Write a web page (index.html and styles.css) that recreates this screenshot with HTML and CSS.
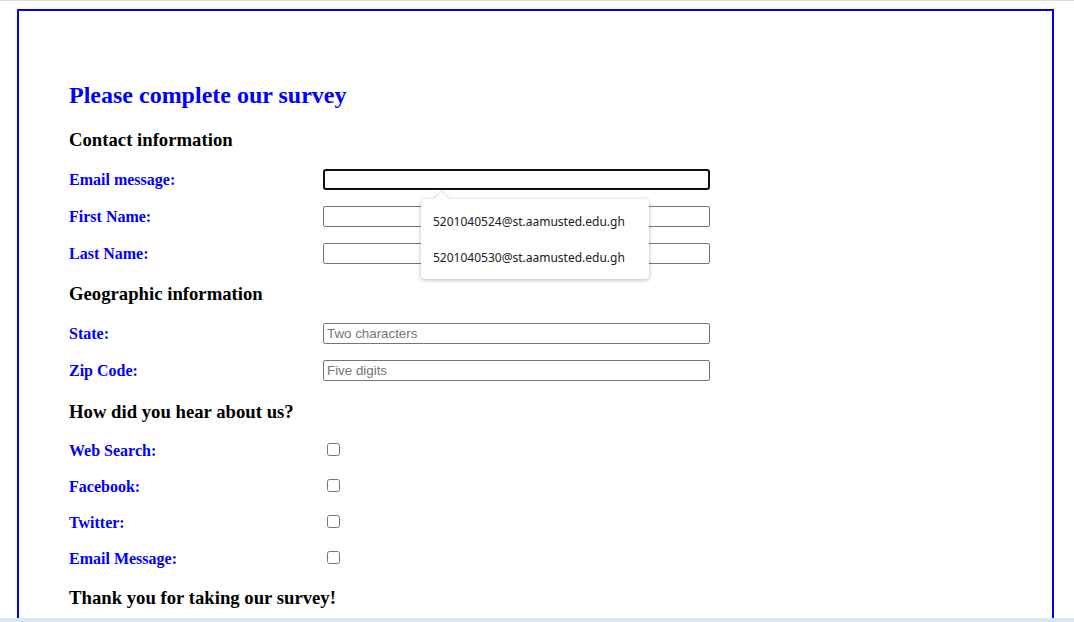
FILE: index.html
```html
<!DOCTYPE html>
<html lang="en">
<head>
<meta charset="utf-8">
<title>Survey</title>
<link rel="stylesheet" href="styles.css">
</head>
<body>
<div class="topline"></div>
<main class="frame">
  <h1 class="title">Please complete our survey</h1>
  <form class="survey">
    <h3 class="section first">Contact information</h3>
    <div class="row">
      <label class="lbl" for="email">Email message:</label>
      <input class="field focused" id="email" type="text">
    </div>
    <div class="row">
      <label class="lbl" for="first">First Name:</label>
      <input class="field" id="first" type="text">
    </div>
    <div class="row">
      <label class="lbl" for="last">Last Name:</label>
      <input class="field" id="last" type="text">
    </div>

    <h3 class="section geo">Geographic information</h3>
    <div class="row">
      <label class="lbl" for="state">State:</label>
      <input class="field" id="state" type="text" placeholder="Two characters">
    </div>
    <div class="row">
      <label class="lbl" for="zip">Zip Code:</label>
      <input class="field" id="zip" type="text" placeholder="Five digits">
    </div>

    <h3 class="section hear">How did you hear about us?</h3>
    <div class="crow">
      <label class="lbl" for="web">Web Search:</label>
      <input class="check" id="web" type="checkbox">
    </div>
    <div class="crow">
      <label class="lbl" for="fb">Facebook:</label>
      <input class="check" id="fb" type="checkbox">
    </div>
    <div class="crow">
      <label class="lbl" for="tw">Twitter:</label>
      <input class="check" id="tw" type="checkbox">
    </div>
    <div class="crow">
      <label class="lbl" for="em">Email Message:</label>
      <input class="check" id="em" type="checkbox">
    </div>

    <h3 class="section thanks">Thank you for taking our survey!</h3>
  </form>

  <div class="suggest">
    <div class="caret"></div>
    <div class="item">5201040524@st.aamusted.edu.gh</div>
    <div class="item">5201040530@st.aamusted.edu.gh</div>
  </div>
</main>
<div class="taskbar"></div>
</body>
</html>
```
FILE: styles.css
```css
html, body {
  margin: 0;
  padding: 0;
  background: #ffffff;
  overflow: hidden;
  height: 622px;
}

body {
  font-family: "Liberation Serif", "Times New Roman", serif;
}

.topline {
  height: 1px;
  background: #dcdcdc;
}

.frame {
  position: relative;
  box-sizing: border-box;
  width: 1037px;
  height: 640px;
  margin: 8px 0 0 17px;
  border: 2px solid #0000ee;
  padding: 70px 0 0 50px;
}

.title {
  margin: 0;
  font-size: 24px;
  line-height: 28px;
  font-weight: bold;
  color: #0000ff;
}

.survey {
  margin: 0;
}

.section {
  margin: 0;
  font-size: 18.72px;
  line-height: 22px;
  font-weight: bold;
  color: #000;
}

.section.first {
  margin: 20px 0 18px;
}

.section.geo {
  margin: 19px 0 18px;
}

.section.hear {
  margin: 20px 0 19px;
}

.section.thanks {
  margin: 19px 0 0;
}

.row {
  display: flex;
  align-items: flex-start;
  height: 21px;
  margin-bottom: 16px;
}

.row:last-of-type {
  margin-bottom: 0;
}

.lbl {
  width: 254px;
  flex: none;
  font-size: 16px;
  font-weight: bold;
  color: #0000ff;
}

.row .lbl {
  line-height: 22px;
}

.field {
  box-sizing: border-box;
  width: 387px;
  height: 21px;
  margin: 0;
  padding: 1px 3px;
  font-family: "Liberation Sans", Arial, sans-serif;
  font-size: 13.33px;
  border: 1px solid #767676;
  border-radius: 2px;
  background: #fff;
  color: #000;
}

.field::placeholder {
  color: #757575;
}

.field.focused {
  border: 2px solid #101010;
  border-radius: 3px;
  outline: none;
}

.crow {
  display: flex;
  align-items: flex-start;
  height: 18px;
  margin-bottom: 18px;
}

.crow .lbl {
  line-height: 18px;
}

.check {
  width: 13px;
  height: 13px;
  margin: 1px 0 0 4px;
}

.suggest {
  position: absolute;
  left: 402px;
  top: 188px;
  width: 228px;
  height: 80px;
  background: #fff;
  border-radius: 4px;
  box-shadow: 0 1px 4px rgba(0, 0, 0, 0.28);
  font-family: "Noto Sans", "Open Sans", sans-serif;
  font-size: 12px;
  color: #202020;
  padding-top: 8px;
  box-sizing: border-box;
}

.caret {
  position: absolute;
  left: 15px;
  top: -5px;
  width: 11px;
  height: 11px;
  background: #fff;
  transform: rotate(45deg);
  box-shadow: -1px -1px 2px rgba(0, 0, 0, 0.12);
}

.item {
  position: relative;
  height: 36px;
  line-height: 29px;
  padding-left: 12px;
  white-space: nowrap;
}

.taskbar {
  position: fixed;
  left: 0;
  right: 0;
  bottom: 0;
  height: 4px;
  background: #d9e8f2;
}
```
